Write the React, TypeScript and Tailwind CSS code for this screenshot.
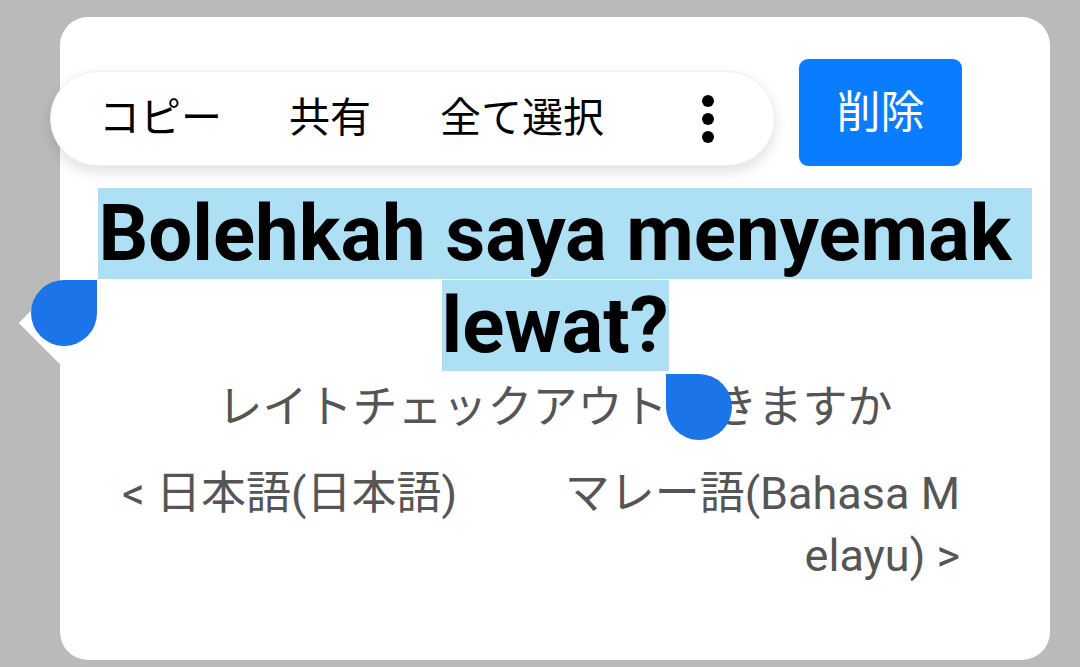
import React from "react";

const font = { fontFamily: 'Roboto, "Noto Sans CJK JP", sans-serif' };

const SelectionToolbar = () => {
    return (
        <div className="absolute left-[-10px] top-[54px] flex h-[95px] w-[725px] items-center rounded-full border border-[#efefef] bg-white pl-[48px] text-[41px] leading-none text-black shadow-[0_6px_14px_rgba(0,0,0,0.12)]">
            <span>コピー</span>
            <span className="ml-[67px]">共有</span>
            <span className="ml-[69px]">全て選択</span>
            <div className="ml-[98px] flex flex-col items-center gap-[6px]">
                <span className="h-[12px] w-[12px] rounded-full bg-black" />
                <span className="h-[12px] w-[12px] rounded-full bg-black" />
                <span className="h-[12px] w-[12px] rounded-full bg-black" />
            </div>
        </div>
    );
};

const App = () => {
    return (
        <div style={font} className="relative h-[667px] w-[1080px] overflow-hidden bg-[#bababa] pl-[60px] pt-[17px]">
            {/* white diamond behind start handle */}
            <div className="absolute left-[32px] top-[291px] h-[64px] w-[64px] rotate-45 bg-white" />

            <div className="relative h-[643px] w-[990px] rounded-[28px] bg-white pt-[42px]">
                <div className="flex justify-end pr-[88px]">
                    <button className="flex h-[107px] w-[163px] items-center justify-center rounded-[9px] bg-[#0a7cff] text-[44px] leading-none text-white">
                        削除
                    </button>
                </div>

                <div className="mt-[22px] text-center text-[78px] font-bold leading-[92px] text-black">
                    <div>
                        <span className="mr-[-20px] bg-[#ade0f4] pr-[20px]">Bolehkah saya menyemak</span>
                    </div>
                    <div>
                        <span className="bg-[#ade0f4]">lewat?</span>
                    </div>
                </div>

                <p className="mt-[5px] text-center text-[45px] leading-[62px] text-[#555555]">
                    レイトチェックアウトできますか
                </p>

                <div className="mt-[24px] grid grid-cols-2 gap-6 pl-[62px] pr-[90px] text-[45px] leading-[62px] text-[#555555]">
                    <p>&lt; 日本語(日本語)</p>
                    <p className="text-right">
                        マレー語(Bahasa M<br />elayu) &gt;
                    </p>
                </div>

                <SelectionToolbar />

                {/* selection handles */}
                <div className="absolute left-[-29px] top-[263px] h-[66px] w-[66px] rounded-full rounded-tr-none bg-[#1b74e8]" />
                <div className="absolute left-[606px] top-[357px] h-[66px] w-[66px] rounded-full rounded-tl-none bg-[#1b74e8]" />
            </div>
        </div>
    );
};

export default App;
